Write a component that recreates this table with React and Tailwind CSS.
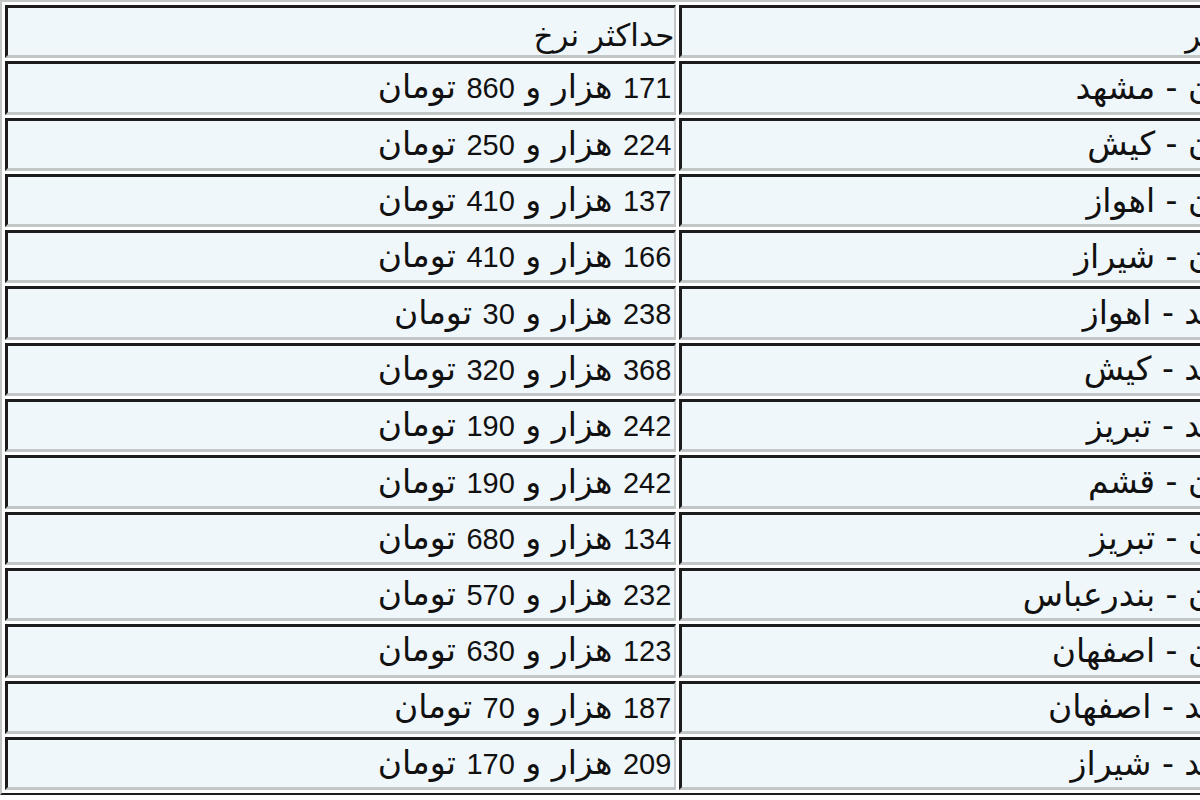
import React from "react";

const rows = [
  ["تهران - مشهد", "171", "860"],
  ["تهران - کیش", "224", "250"],
  ["تهران - اهواز", "137", "410"],
  ["تهران - شیراز", "166", "410"],
  ["مشهد - اهواز", "238", "30"],
  ["مشهد - کیش", "368", "320"],
  ["مشهد - تبریز", "242", "190"],
  ["تهران - قشم", "242", "190"],
  ["تهران - تبریز", "134", "680"],
  ["تهران - بندرعباس", "232", "570"],
  ["تهران - اصفهان", "123", "630"],
  ["مشهد - اصفهان", "187", "70"],
  ["مشهد - شیراز", "209", "170"],
];

const cell =
  "h-[53.3px] bg-[#f0f7fa] border-solid border-t-[3px] border-r-2 border-b-[3px] border-l-[3px] border-t-[#1c1c1c] border-l-[#1c1c1c] border-r-[#c2c6c6] border-b-[#c2c6c6] text-right align-middle whitespace-nowrap overflow-hidden leading-[40px]";

const num = "text-[29px] font-['Liberation_Sans',sans-serif]";

export default function App() {
  return (
    <div
      dir="rtl"
      className="w-[1200px] h-[800px] overflow-hidden bg-white text-[#111]"
      style={{ fontFamily: '"DejaVu Sans", "Liberation Sans", sans-serif' }}
    >
      <table className="-mr-[75px] border-separate border-spacing-[3.3px] border-solid border-t-2 border-r-2 border-b-2 border-l-2 border-t-[#c2c6c6] border-l-[#c2c6c6] border-r-[#1c1c1c] border-b-[#1c1c1c] table-fixed">
        <colgroup>
          <col className="w-[617px]" />
          <col className="w-[700px]" />
        </colgroup>
        <thead>
          <tr>
            <th className={`${cell} font-normal text-[31px] pr-[12px] pt-[6px]`}>مسیر</th>
            <th className={`${cell} font-normal text-[31px] pr-0 pt-[6px]`}>حداکثر نرخ</th>
          </tr>
        </thead>
        <tbody>
          {rows.map(([route, a, b], i) => (
            <tr key={i}>
              <td className={`${cell} text-[33px] pr-[4px]`}>{route}</td>
              <td className={`${cell} text-[33px] pr-[3px]`}>
                <span className={num}>{a}</span> هزار و{" "}
                <span className={num}>{b}</span> تومان
              </td>
            </tr>
          ))}
        </tbody>
      </table>
    </div>
  );
}
